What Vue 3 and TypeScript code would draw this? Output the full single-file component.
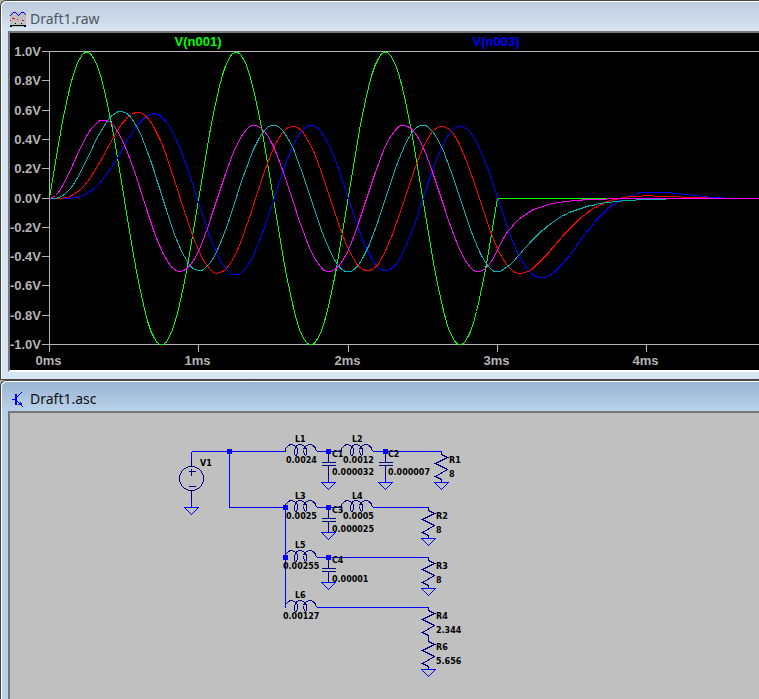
<script setup lang="ts">
interface Trace {
  name: string
  color: string
  path: string
}
interface Label {
  x: number
  y: number
  text: string
}

// Plot scale: pixels per millisecond and per volt, and the origin.
const originX = 49
const originY = 198
const pxPerMs = 149.3
const pxPerVolt = 146.5
const load = 8

const source = (t: number): number => (t < 0.003 ? Math.sin(2 * Math.PI * 1000 * t) : 0)

// LC ladder: parts alternate series inductor, shunt capacitor.
function simulate(parts: number[], gain: number): number[] {
  const n = parts.length
  const dt = 1e-6
  const derive = (s: number[], t: number): number[] =>
    s.map((value, i) => {
      const prev = i === 0 ? source(t) : s[i - 1]
      let next: number
      if (i < n - 1) next = s[i + 1]
      else next = i % 2 === 0 ? value * load : value / load
      return (prev - next) / parts[i]
    })
  let state: number[] = parts.map(() => 0)
  const out: number[] = []
  for (let step = 0; step <= 6000; step++) {
    const t = step * dt
    const last = state[n - 1]
    if (step % 20 === 0) out.push((n % 2 === 1 ? last * load : last) * gain)
    const k1 = derive(state, t)
    const k2 = derive(state.map((v, i) => v + (k1[i] * dt) / 2), t + dt / 2)
    const k3 = derive(state.map((v, i) => v + (k2[i] * dt) / 2), t + dt / 2)
    const k4 = derive(state.map((v, i) => v + k3[i] * dt), t + dt)
    state = state.map((v, i) => v + (dt / 6) * (k1[i] + 2 * k2[i] + 2 * k3[i] + k4[i]))
  }
  return out
}

function toPath(samples: number[]): string {
  return samples
    .map((v, i) => {
      const x = originX + i * 0.02 * pxPerMs + 0.5
      const y = Math.round(originY - v * pxPerVolt) + 0.5
      return `${i === 0 ? 'M' : 'L'}${x.toFixed(1)} ${y}`
    })
    .join('')
}

const sourceSamples = Array.from({ length: 301 }, (_, i) => source(i * 20e-6))

const traces: Trace[] = [
  { name: 'V(n001)', color: '#00ff00', path: toPath(sourceSamples) },
  { name: 'V(n003)', color: '#0000ff', path: toPath(simulate([0.0024, 0.000032, 0.0012, 0.000007], 1)) },
  { name: 'V(n005)', color: '#ff0000', path: toPath(simulate([0.0025, 0.000025, 0.0005], 1)) },
  { name: 'V(n006)', color: '#00b4b4', path: toPath(simulate([0.00255, 0.00001], 1)) },
  { name: 'V(n008)', color: '#ff00ff', path: toPath(simulate([0.00127], 0.707)) },
]

const voltTicks = Array.from({ length: 11 }, (_, i) => ({
  y: Math.round(51 + i * 29.3) + 0.5,
  text: `${(1 - i * 0.2).toFixed(1).replace('-0.0', '0.0')}V`,
}))
const timeTicks = Array.from({ length: 5 }, (_, i) => ({
  x: Math.round(originX + i * pxPerMs) + 0.5,
  text: `${i}ms`,
}))

const wires = [
  'M191 451H285', 'M191 451V459', 'M191 499V507', 'M229 451V507H285V607',
  'M316 451H341', 'M372 451H441', 'M316 507H341', 'M372 507H428',
  'M316 557H428', 'M316 607H428', 'M328 476V482', 'M385 476V482',
]
const inductors = [[285, 451], [341, 451], [285, 507], [341, 507], [285, 557], [285, 607]]
const capacitors = [[328, 451], [385, 451], [328, 507], [328, 557]]
const resistors = [[441, 451], [428, 507], [428, 557], [428, 607], [428, 638]]
const grounds = [[191, 507], [328, 482], [385, 482], [441, 482], [328, 532], [428, 538], [328, 582], [428, 588], [428, 669]]
const junctions = [[229, 451], [328, 451], [385, 451], [285, 507], [328, 507], [285, 557], [328, 557]]
const labels: Label[] = [
  { x: 200, y: 466, text: 'V1' },
  { x: 295, y: 442, text: 'L1' }, { x: 286, y: 463, text: '0.0024' },
  { x: 352, y: 442, text: 'L2' }, { x: 343, y: 463, text: '0.0012' },
  { x: 332, y: 457, text: 'C1' }, { x: 332, y: 475, text: '0.000032' },
  { x: 388, y: 457, text: 'C2' }, { x: 388, y: 475, text: '0.000007' },
  { x: 449, y: 463, text: 'R1' }, { x: 449, y: 477, text: '8' },
  { x: 295, y: 499, text: 'L3' }, { x: 286, y: 519, text: '0.0025' },
  { x: 352, y: 499, text: 'L4' }, { x: 343, y: 519, text: '0.0005' },
  { x: 332, y: 513, text: 'C3' }, { x: 332, y: 532, text: '0.000025' },
  { x: 436, y: 519, text: 'R2' }, { x: 436, y: 533, text: '8' },
  { x: 295, y: 548, text: 'L5' }, { x: 283, y: 569, text: '0.00255' },
  { x: 332, y: 563, text: 'C4' }, { x: 332, y: 582, text: '0.00001' },
  { x: 436, y: 569, text: 'R3' }, { x: 436, y: 583, text: '8' },
  { x: 295, y: 598, text: 'L6' }, { x: 283, y: 619, text: '0.00127' },
  { x: 436, y: 619, text: 'R4' }, { x: 436, y: 633, text: '2.344' },
  { x: 436, y: 650, text: 'R6' }, { x: 436, y: 664, text: '5.656' },
]
</script>

<template>
  <main class="desktop">
    <section class="window waveform" aria-label="Draft1.raw">
      <header class="title-bar">
        <svg class="icon" width="16" height="16" viewBox="0 0 16 16" shape-rendering="crispEdges" aria-hidden="true">
          <rect width="16" height="16" fill="#c0c0c0" />
          <path d="M0 4.5h1M1 3.5h1M2 2.5h1M3 1.5h3M6 2.5h1M7 3.5h1M8 4.5h1M9 3.5h1M10 2.5h1M11 1.5h3M14 2.5h1M15 3.5h1" stroke="#00f" />
          <path d="M2 7.5h3M0 9.5h1M7 8.5h1M12 9.5h2" stroke="#f00" />
          <path d="M0 14.5h16M0 15.5h2M14 15.5h2M5 12.5h1M11 12.5h1" stroke="#000" />
        </svg>
        <h1 class="title">Draft1.raw</h1>
      </header>
      <div class="pane plot">
        <svg class="drawing" width="100%" height="337" role="img" aria-label="Waveform plot">
          <g transform="translate(-10 -33)">
            <g class="axes" shape-rendering="crispEdges">
              <path d="M49.5 51V345" />
              <line x1="49" y1="51.5" x2="110%" y2="51.5" />
              <line x1="49" y1="344.5" x2="110%" y2="344.5" />
              <line v-for="tick in voltTicks" :key="tick.y" x1="42" x2="49" :y1="tick.y" :y2="tick.y" />
              <line v-for="tick in timeTicks" :key="tick.x" :x1="tick.x" :x2="tick.x" y1="345" y2="352" />
            </g>
            <g class="traces" shape-rendering="crispEdges">
              <path v-for="trace in traces" :key="trace.name" :d="trace.path" :stroke="trace.color" />
            </g>
            <g class="scale volts">
              <text v-for="tick in voltTicks" :key="tick.y" x="41" :y="tick.y + 4.5">{{ tick.text }}</text>
            </g>
            <g class="scale times">
              <text v-for="tick in timeTicks" :key="tick.x" :x="tick.x - 1" y="365">{{ tick.text }}</text>
            </g>
            <text class="trace-name" x="198" y="46" fill="#00ff00">V(n001)</text>
            <text class="trace-name" x="496" y="46" fill="#0000ff">V(n003)</text>
          </g>
        </svg>
      </div>
    </section>

    <section class="window schematic" aria-label="Draft1.asc">
      <header class="title-bar">
        <svg class="icon" width="16" height="16" viewBox="0 0 16 16" shape-rendering="crispEdges" aria-hidden="true">
          <path d="M2 8.5h3M11 1.5h1M10 2.5h1M9 3.5h1M8 4.5h1M7 5.5h1M7 10.5h1M8 11.5h1M9 12.5h2M8 13.5h4M11 12.5h1M10 11.5h1M11 14.5h1M12 15.5h1" fill="none" stroke="#00f" />
          <path d="M5 3h2v11H5z" fill="#00f" />
        </svg>
        <h2 class="title">Draft1.asc</h2>
      </header>
      <div class="pane sheet">
        <svg class="drawing" width="100%" height="286" role="img" aria-label="Crossover schematic">
          <g transform="translate(-10 -413)">
            <g class="parts" transform="translate(0.5 0.5)" shape-rendering="crispEdges">
              <circle cx="191" cy="478" r="12" />
              <path d="M191 459V466M191 490V499M188 471H195M191 468V475M188 486H195" />
              <path
                v-for="([x, y], i) in inductors"
                :key="`l${i}`"
                :transform="`translate(${x} ${y})`"
                d="M0 0V-3Q3 -7 6 -7Q12 -6 12 -1Q12 4 10 4Q8 3 9 -1Q10 -7 15 -7Q21 -6 21 0Q21 4 20 4Q17 0 18 -2Q20 -7 25 -7Q30 -6 31 0"
              />
              <path
                v-for="([x, y], i) in capacitors"
                :key="`c${i}`"
                :transform="`translate(${x} ${y})`"
                d="M0 0V11M-7 11H7M-7 14H7M0 14V25"
              />
              <path
                v-for="([x, y], i) in resistors"
                :key="`r${i}`"
                :transform="`translate(${x} ${y})`"
                d="M0 0V3L6 6L-6 12L6 18L-6 25L0 28V31"
              />
            </g>
            <g class="wires" transform="translate(0.5 0.5)" shape-rendering="crispEdges">
              <path v-for="wire in wires" :key="wire" :d="wire" />
              <path
                v-for="([x, y], i) in grounds"
                :key="`g${i}`"
                :transform="`translate(${x} ${y})`"
                d="M-7 0H7L0 7Z"
              />
            </g>
            <rect
              v-for="([x, y], i) in junctions"
              :key="`j${i}`"
              :x="x - 2"
              :y="y - 2"
              width="5"
              height="5"
              fill="#00f"
            />
            <text v-for="(label, i) in labels" :key="i" class="part-label" :x="label.x" :y="label.y">{{ label.text }}</text>
          </g>
        </svg>
      </div>
    </section>
  </main>
</template>

<style>
body {
  margin: 0;
}
</style>

<style scoped>
.desktop {
  display: flex;
  flex-direction: column;
  min-height: 100vh;
  overflow: hidden;
  background: #b8b4ac;
}
.window {
  display: flex;
  flex-direction: column;
  box-sizing: border-box;
  border: 1px solid #444;
  border-right: 0;
  border-radius: 6px 0 0 0;
  padding-left: 7px;
  box-shadow: inset 1px 1px 0 #fff;
}
.waveform {
  padding-bottom: 7px;
  background: linear-gradient(#bccbdc, #d7e4f2 30px);
}
.schematic {
  flex: 1;
  border-bottom: 0;
  background: linear-gradient(#99b4d1, #b9d1ea 30px);
}
.title-bar {
  display: flex;
  align-items: center;
  gap: 4px;
  height: 30px;
  padding: 6px 0 0 2px;
  box-sizing: border-box;
}
.icon {
  flex: none;
}
.title {
  margin: 0;
  font: 14px/20px "Noto Sans", sans-serif;
  color: #111;
}
.waveform .title {
  color: #4c5763;
}
.pane {
  border: 2px solid #777;
  border-right: 0;
  border-bottom-color: #fff;
}
.plot {
  background: #000;
}
.sheet {
  flex: 1;
  border-bottom: 0;
  background: #c0c0c0;
}
.drawing {
  display: block;
}
.axes {
  stroke: #b4b4b4;
}
.axes,
.traces,
.parts,
.wires {
  fill: none;
}
.parts {
  stroke: #000080;
}
.wires {
  stroke: #0000ff;
}
.scale,
.trace-name {
  font: bold 13px "Liberation Sans", sans-serif;
}
.scale {
  fill: #b4b4b4;
}
.volts {
  text-anchor: end;
}
.times,
.trace-name {
  text-anchor: middle;
}
.part-label {
  font: bold 8px "DejaVu Sans", sans-serif;
  fill: #000;
}
</style>
